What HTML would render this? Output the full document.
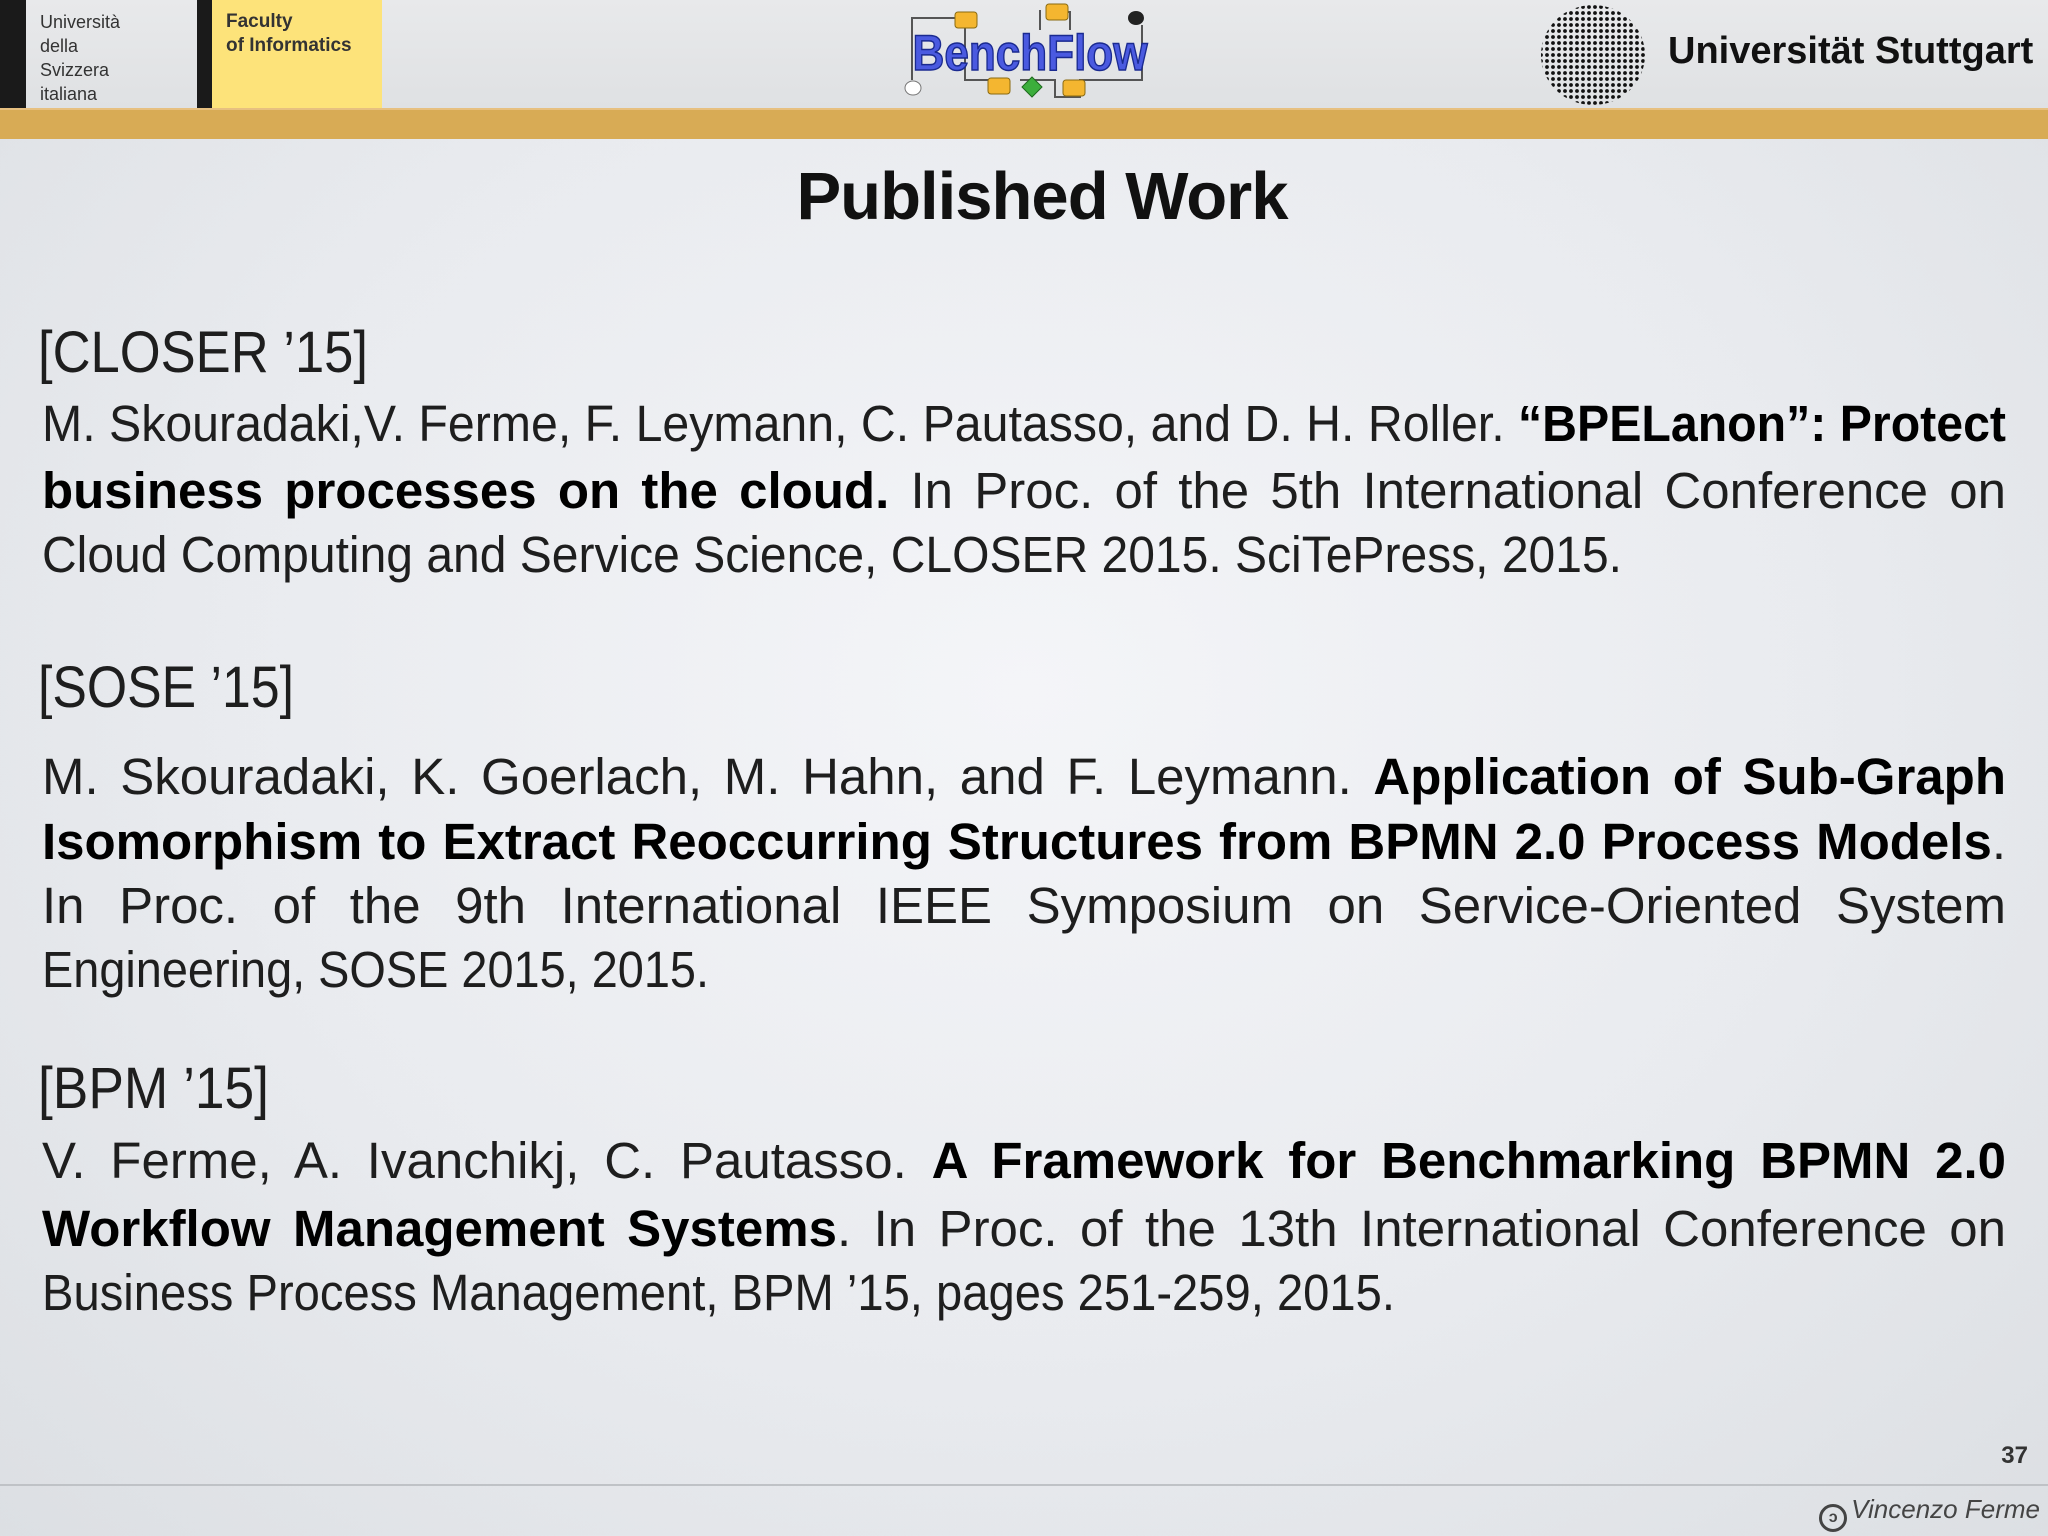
<!DOCTYPE html>
<html><head><meta charset="utf-8">
<style>
html,body{margin:0;padding:0}
body{width:2048px;height:1536px;position:relative;overflow:hidden;font-family:"Liberation Sans",sans-serif;color:#1c1c1c;
background:radial-gradient(ellipse at 50% 45%,#f4f5f8 0%,#e9ebef 55%,#dcdfe3 100%);}
.hdr{position:absolute;left:0;top:0;width:2048px;height:108px;background:linear-gradient(#e8e9eb,#dfe1e3);}
.gold{position:absolute;left:0;top:108px;width:2048px;height:29px;background:#d8ab55;border-top:2px solid #e7c080}
.abs{position:absolute}
.l{position:absolute;left:42px;width:1964px;height:66px;line-height:66px;font-size:51px;white-space:nowrap;color:#1e1e1e}
.l span,.h span{display:inline-block;transform-origin:0 50%}
.j{text-align:justify;text-align-last:justify}
.h{position:absolute;left:38px;font-size:58px;line-height:70px;color:#1e1e1e;white-space:nowrap}
b{font-weight:bold;color:#000}
</style></head><body>
<div class="hdr"></div>
<div class="abs" style="left:0;top:0;width:26px;height:108px;background:#1a1a1a"></div>
<div class="abs" style="left:40px;top:10px;font-size:18px;line-height:24px;color:#333">Università<br>della<br>Svizzera<br>italiana</div>
<div class="abs" style="left:197px;top:0;width:15px;height:108px;background:#1a1a1a"></div>
<div class="abs" style="left:212px;top:0;width:170px;height:108px;background:#fde37a"></div>
<div class="abs" style="left:226px;top:10px;font-size:19px;line-height:24px;font-weight:bold;color:#333">Faculty<br>of Informatics</div>
<div class="gold"></div>

<svg class="abs" style="left:880px;top:0" width="300" height="108" viewBox="0 0 300 108">
<g stroke="#555" stroke-width="2" fill="none">
<path d="M32 80 V18 H75"/><path d="M75 18 H85 V80 H110"/><path d="M140 80 H175 V97 H190"/><path d="M190 97 H200 V80 H240"/><path d="M170 12 H190 V30"/><path d="M240 80 H262 V25"/><path d="M160 10 V30"/>
</g>
<rect x="75" y="12" width="22" height="16" rx="3" fill="#f4b630" stroke="#8a6a10"/>
<rect x="166" y="4" width="22" height="16" rx="3" fill="#f4b630" stroke="#8a6a10"/>
<rect x="108" y="78" width="22" height="16" rx="3" fill="#f4b630" stroke="#8a6a10"/>
<rect x="183" y="80" width="22" height="16" rx="3" fill="#f4b630" stroke="#8a6a10"/>
<path d="M152 77 L162 87 L152 97 L142 87Z" fill="#3cae3c" stroke="#1c6a1c"/>
<ellipse cx="33" cy="88" rx="8" ry="7" fill="#fff" stroke="#777"/>
<ellipse cx="256" cy="18" rx="8" ry="7" fill="#222"/>
<text x="150" y="70" text-anchor="middle" font-family="Liberation Sans" font-weight="bold" font-size="50" fill="#4a5ae0" stroke="#1a2a90" stroke-width="1.5" textLength="235" lengthAdjust="spacingAndGlyphs">BenchFlow</text>
</svg>

<svg class="abs" style="left:1538px;top:4px" width="110" height="102" viewBox="0 0 110 102">
<defs><pattern id="d" width="6" height="6" patternUnits="userSpaceOnUse"><circle cx="3" cy="3" r="1.9" fill="#111"/></pattern></defs>
<ellipse cx="55" cy="51" rx="52" ry="50" fill="url(#d)"/>
</svg>
<div class="abs" style="left:1668px;top:30px;font-size:38px;font-weight:bold;color:#111">Universität Stuttgart</div>

<div class="abs" style="left:0;width:2084px;top:158px;text-align:center;font-size:67px;font-weight:bold;line-height:78px;color:#111;letter-spacing:-1px">Published Work</div>

<div class="h" style="top:318px" data-w="330"><span>[CLOSER ’15]</span></div>
<div class="l j" style="top:391px"><span>M. Skouradaki,V. Ferme, F. Leymann, C. Pautasso, and D. H. Roller. <b>“BPELanon”: Protect</b></span></div>
<div class="l j" style="top:458px"><span><b>business processes on the cloud.</b> In Proc. of the 5th International Conference on</span></div>
<div class="l" style="top:522px" data-w="1580"><span>Cloud Computing and Service Science, CLOSER 2015. SciTePress, 2015.</span></div>

<div class="h" style="top:653px" data-w="256"><span>[SOSE ’15]</span></div>
<div class="l j" style="top:744px"><span>M. Skouradaki, K. Goerlach, M. Hahn, and F. Leymann. <b>Application of Sub-Graph</b></span></div>
<div class="l j" style="top:809px"><span><b>Isomorphism to Extract Reoccurring Structures from BPMN 2.0 Process Models</b>.</span></div>
<div class="l j" style="top:873px"><span>In Proc. of the 9th International IEEE Symposium on Service-Oriented System</span></div>
<div class="l" style="top:937px" data-w="667"><span>Engineering, SOSE 2015, 2015.</span></div>

<div class="h" style="top:1054px" data-w="231"><span>[BPM ’15]</span></div>
<div class="l j" style="top:1128px"><span>V. Ferme, A. Ivanchikj, C. Pautasso. <b>A Framework for Benchmarking BPMN 2.0</b></span></div>
<div class="l j" style="top:1196px"><span><b>Workflow Management Systems</b>. In Proc. of the 13th International Conference on</span></div>
<div class="l" style="top:1260px" data-w="1353"><span>Business Process Management, BPM ’15, pages 251-259, 2015.</span></div>

<div class="abs" style="right:20px;top:1442px;font-size:24px;font-weight:bold;color:#333">37</div>
<div class="abs" style="left:0;top:1484px;width:2048px;height:2px;background:#bfc2c6"></div>
<div class="abs" style="right:8px;top:1494px;font-size:26px;font-style:italic;color:#444">
<span style="display:inline-block;width:22px;height:22px;border:3px solid #444;border-radius:50%;vertical-align:-4px;margin-right:4px;font-size:16px;line-height:22px;text-align:center;font-style:normal;font-weight:bold">ↄ</span>Vincenzo Ferme</div>

<script>
document.querySelectorAll('.l,.h').forEach(function(d){
  var s=d.querySelector('span');var W=1964;var w=s.getBoundingClientRect().width;
  if(d.dataset.w){s.style.transform='scaleX('+(d.dataset.w/w)+')';return;}
  if(d.classList.contains('j')){
    if(w>W){s.style.transform='scaleX('+(W/w)+')';}
    else{var n=(s.textContent.match(/ /g)||[]).length;if(n)s.style.wordSpacing=((W-w)/n)+'px';}
  } else if(w>W){s.style.transform='scaleX('+(W/w)+')';}
});
</script>
</body></html>
